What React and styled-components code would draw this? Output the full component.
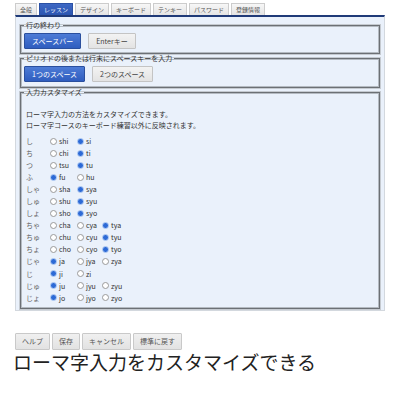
import React from "react";
import styled, { createGlobalStyle } from "styled-components";

const GlobalStyle = createGlobalStyle`
  body {
    margin: 0;
    background: #ffffff;
    font-family: "Noto Sans CJK JP", "Noto Sans", sans-serif;
  }
`;

const Pagina = styled.div`
  padding: 3px 15px 0 15px;
  width: 370px;
`;

const Pestanas = styled.div`
  display: flex;
  gap: 2px;
  height: 12px;
`;

const Pestana = styled.div`
  height: 12px;
  padding: 0 4px;
  box-sizing: border-box;
  font-size: 6px;
  line-height: 11px;
  border: 1px solid ${(p) => (p.$activa ? "#2a50a4" : "#cccccc")};
  border-bottom: none;
  background: ${(p) =>
    p.$activa
      ? "linear-gradient(#3e68c4, #2b55b0)"
      : "linear-gradient(#f7f7f7, #e4e4e4)"};
  color: ${(p) => (p.$activa ? "#ffffff" : "#555555")};
`;

const Panel = styled.div`
  border-top: 2px solid #1f3a78;
  border-left: 1px solid #d3d8de;
  border-right: 1px solid #d3d8de;
  border-bottom: 1px solid #d3d8de;
  background: #eaf1fb;
  padding: 3px 4px 2px 4px;
`;

const Grupo = styled.fieldset`
  margin: 0 0 -1px 0;
  padding: ${(p) => p.$relleno || "3px 3px 4px 3px"};
  border: 1px solid #6c7075;
  box-shadow: inset 0 0 0 1px #b4bac1, 0 0 0 1px #c5cad0;
  min-width: 0;
`;

const Leyenda = styled.legend`
  padding: 0 2px;
  margin-left: 0;
  font-size: 7px;
  line-height: 10px;
  color: #333333;
`;

const FilaBotones = styled.div`
  display: flex;
  gap: 7px;
`;

const Boton = styled.button`
  height: 16px;
  padding: 0 7px;
  font-family: inherit;
  font-size: 7px;
  line-height: 14px;
  border-radius: 1px;
  border: 1px solid ${(p) => (p.$azul ? "#2a4f9e" : "#c4c4c4")};
  background: ${(p) =>
    p.$azul
      ? "linear-gradient(#4d7bd6, #2f5dbf)"
      : "linear-gradient(#f3f3f3, #e3e3e3)"};
  color: ${(p) => (p.$azul ? "#ffffff" : "#444444")};
`;

const Descripcion = styled.div`
  font-size: 7px;
  line-height: 10.5px;
  color: #333333;
  padding-left: 2px;
  margin-bottom: 5px;
`;

const Tabla = styled.div`
  display: grid;
  grid-template-columns: 24px 27px 25px auto;
  grid-auto-rows: 12.05px;
  padding-left: 2px;
  align-items: center;
`;

const Kana = styled.div`
  font-size: 7px;
  color: #666666;
`;

const Opcion = styled.div`
  display: flex;
  align-items: center;
  gap: 2px;
  font-size: 7px;
  color: #333333;
`;

const Radio = styled.span`
  width: 5px;
  height: 5px;
  border-radius: 50%;
  border: 1px solid ${(p) => (p.$marcado ? "#9cbcef" : "#9a9a9a")};
  background: ${(p) =>
    p.$marcado ? "radial-gradient(#2d6ad6 55%, #6d98e4)" : "#ffffff"};
`;

const Acciones = styled.div`
  display: flex;
  gap: 2px;
  margin-top: 22px;
`;

const BotonGris = styled.button`
  height: 17px;
  padding: 0 6px;
  font-family: inherit;
  font-size: 7px;
  line-height: 15px;
  border: 1px solid #c9c9c9;
  border-radius: 1px;
  background: linear-gradient(#f0f0f0, #e2e2e2);
  color: #555555;
`;

const Titulo = styled.h1`
  margin: 0 0 0 -2px;
  font-size: 19px;
  line-height: 24px;
  font-weight: 400;
  color: #222222;
`;

const pestanas = ["全般", "レッスン", "デザイン", "キーボード", "テンキー", "パスワード", "登録情報"];

const filas = [
  ["し", [["shi"], ["si", 1]]],
  ["ち", [["chi"], ["ti", 1]]],
  ["つ", [["tsu"], ["tu", 1]]],
  ["ふ", [["fu", 1], ["hu"]]],
  ["しゃ", [["sha"], ["sya", 1]]],
  ["しゅ", [["shu"], ["syu", 1]]],
  ["しょ", [["sho"], ["syo", 1]]],
  ["ちゃ", [["cha"], ["cya"], ["tya", 1]]],
  ["ちゅ", [["chu"], ["cyu"], ["tyu", 1]]],
  ["ちょ", [["cho"], ["cyo"], ["tyo", 1]]],
  ["じゃ", [["ja", 1], ["jya"], ["zya"]]],
  ["じ", [["ji", 1], ["zi"]]],
  ["じゅ", [["ju", 1], ["jyu"], ["zyu"]]],
  ["じょ", [["jo", 1], ["jyo"], ["zyo"]]],
];

const App = () => {
  return (
    <>
      <GlobalStyle />
      <Pagina>
        <Pestanas>
          {pestanas.map((p) => (
            <Pestana key={p} $activa={p === "レッスン"}>
              {p}
            </Pestana>
          ))}
        </Pestanas>
        <Panel>
          <Grupo>
            <Leyenda>行の終わり</Leyenda>
            <FilaBotones>
              <Boton $azul>スペースバー</Boton>
              <Boton>Enterキー</Boton>
            </FilaBotones>
          </Grupo>
          <Grupo $relleno="3px 3px 5px 3px">
            <Leyenda>ピリオドの後または行末にスペースキーを入力</Leyenda>
            <FilaBotones>
              <Boton $azul>1つのスペース</Boton>
              <Boton>2つのスペース</Boton>
            </FilaBotones>
          </Grupo>
          <Grupo $relleno="12px 3px 4px 3px">
            <Leyenda>入力カスタマイズ</Leyenda>
            <Descripcion>
              ローマ字入力の方法をカスタマイズできます。
              <br />
              ローマ字コースのキーボード練習以外に反映されます。
            </Descripcion>
            <Tabla>
              {filas.map(([kana, opciones]) => (
                <React.Fragment key={kana}>
                  <Kana>{kana}</Kana>
                  {opciones.map(([texto, marcado]) => (
                    <Opcion key={texto}>
                      <Radio $marcado={!!marcado} />
                      {texto}
                    </Opcion>
                  ))}
                  {opciones.length === 2 && <span />}
                </React.Fragment>
              ))}
            </Tabla>
          </Grupo>
        </Panel>
        <Acciones>
          <BotonGris>ヘルプ</BotonGris>
          <BotonGris>保存</BotonGris>
          <BotonGris>キャンセル</BotonGris>
          <BotonGris>標準に戻す</BotonGris>
        </Acciones>
        <Titulo>ローマ字入力をカスタマイズできる</Titulo>
      </Pagina>
    </>
  );
};

export default App;
